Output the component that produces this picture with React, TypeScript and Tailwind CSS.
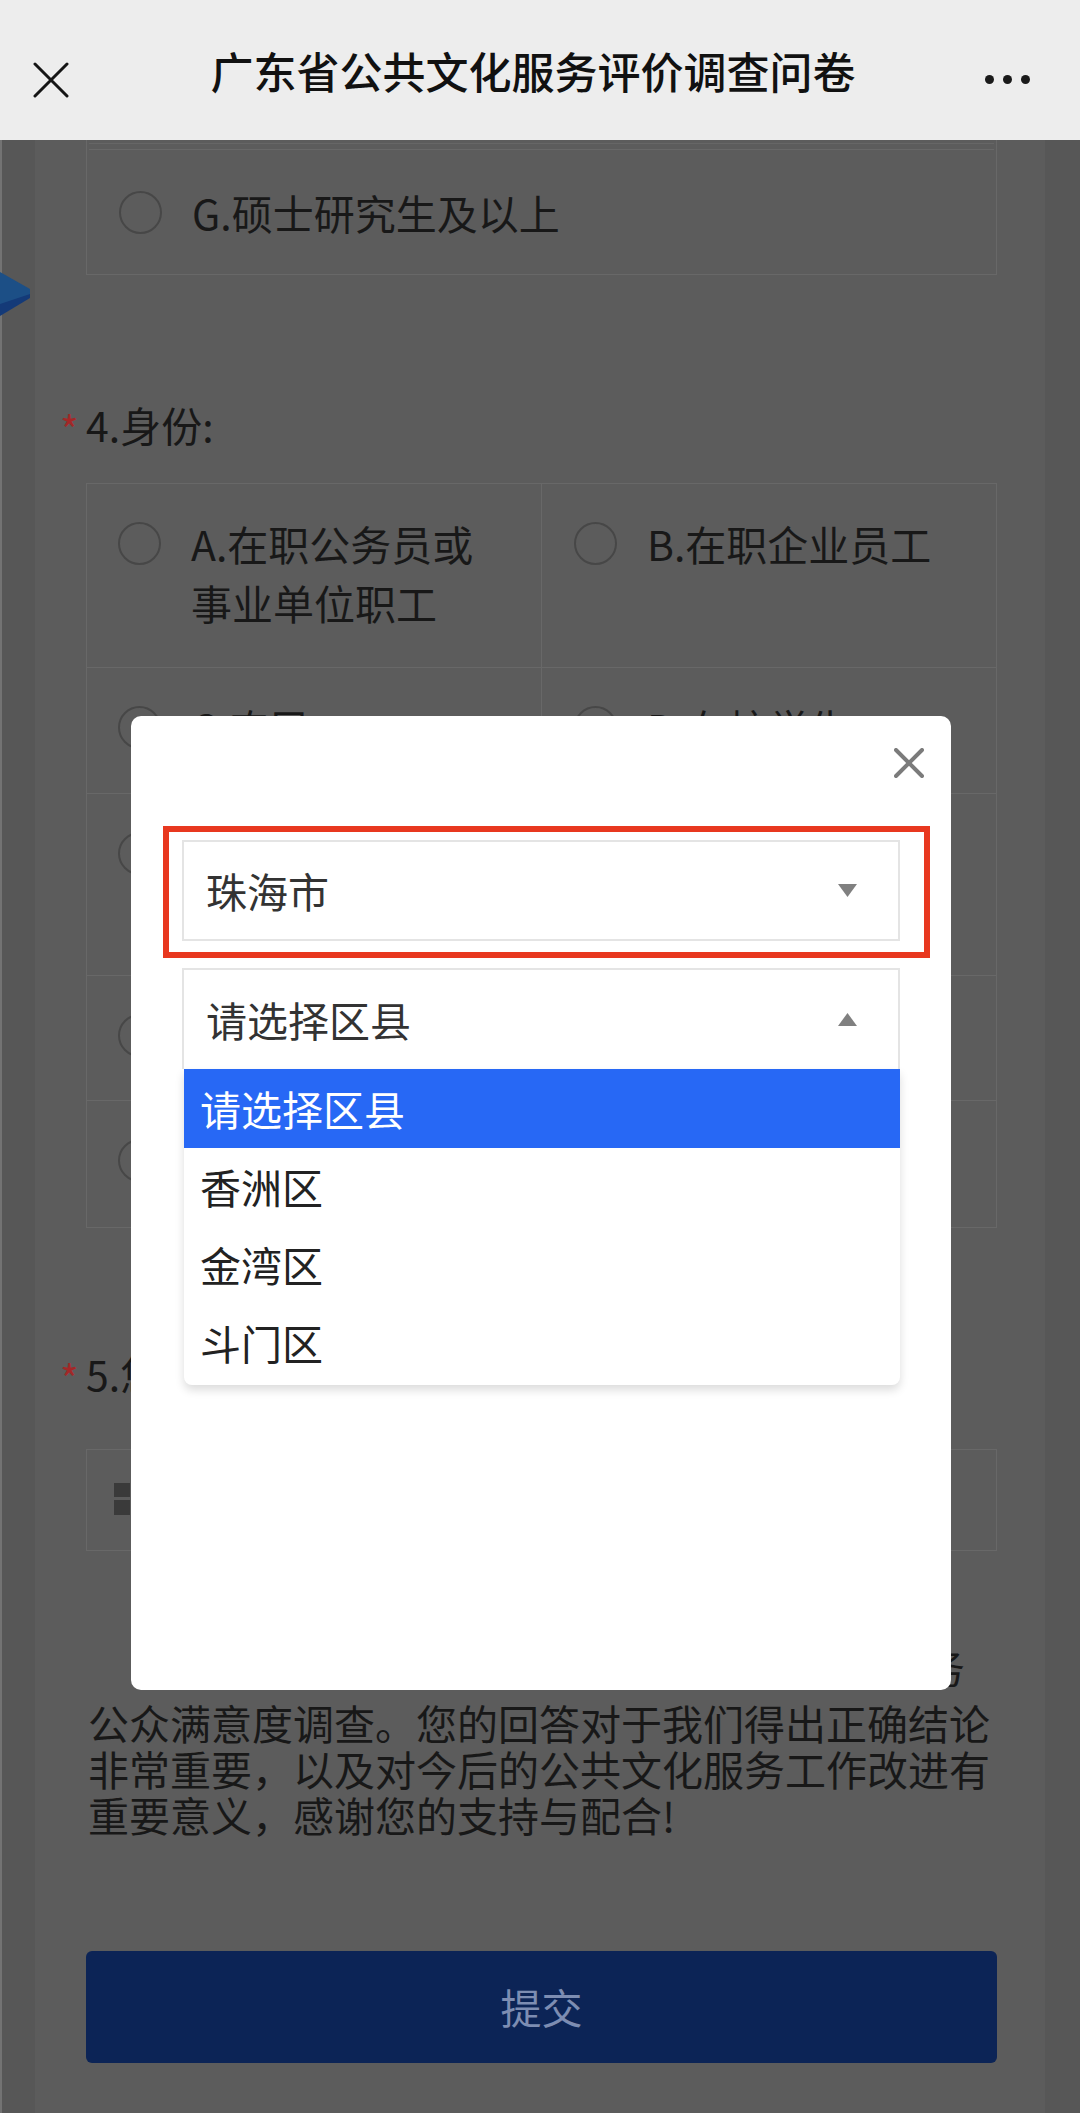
import React from "react";

const Radio = () => (
  <span className="mt-[8px] block h-[43px] w-[43px] shrink-0 rounded-full border-2 border-[#474747]" />
);

type Cell = { text: string[] };

const rows: { h: string; cells: Cell[] }[] = [
  { h: "h-[184px]", cells: [{ text: ["A.在职公务员或", "事业单位职工"] }, { text: ["B.在职企业员工"] }] },
  { h: "h-[126px]", cells: [{ text: ["C.农民"] }, { text: ["D.在校学生"] }] },
  { h: "h-[182px]", cells: [{ text: ["E.进城务工人员", "或个体经营者"] }, { text: ["F.离退休人员"] }] },
  { h: "h-[125px]", cells: [{ text: ["G.自由职业者"] }, { text: ["H.无业人员"] }] },
  { h: "h-[127px]", cells: [{ text: ["I.其他"] }, { text: [""] }] },
];

const Star = () => (
  <span className="-ml-[26px] w-[26px] self-start pt-[14px] text-[40px] leading-none text-[#a32828]">*</span>
);

export default function App() {
  return (
    <div className="relative h-[2113px] w-[1080px] overflow-hidden bg-[#575757] font-['Noto_Sans_CJK_SC','Noto_Sans',sans-serif]">
      {/* top bar */}
      <header className="relative flex h-[140px] items-center justify-center bg-[#ededed]">
        <svg className="absolute left-[33px] top-[62px]" width="36" height="36" viewBox="0 0 36 36">
          <path d="M2 2 L34 34 M34 2 L2 34" stroke="#151515" strokeWidth="3" strokeLinecap="round" />
        </svg>
        <h1 className="pr-[14px] text-[43px] font-medium leading-none text-[#111111]">广东省公共文化服务评价调查问卷</h1>
        <div className="absolute left-[985px] top-[75px] flex gap-[9px]">
          <span className="h-[9px] w-[9px] rounded-full bg-[#1a1a1a]" />
          <span className="h-[9px] w-[9px] rounded-full bg-[#1a1a1a]" />
          <span className="h-[9px] w-[9px] rounded-full bg-[#1a1a1a]" />
        </div>
      </header>

      {/* dimmed page */}
      <main className="mx-[35px] h-[1973px] bg-[#5c5c5c] pl-[51px] pr-[48px] text-[41px] text-[#181818]">
        {/* G option box */}
        <div className="flex h-[135px] flex-col border-x border-b border-[#686868] px-[2px]">
          <div className="mt-[3px] border-t border-[#666666]" />
          <div className="mt-[5px] flex flex-1 items-center border-t border-[#686868] pl-[30px]">
            <span className="block h-[43px] w-[43px] shrink-0 rounded-full border-2 border-[#474747]" />
            <span className="ml-[30px] leading-none">G.硕士研究生及以上</span>
          </div>
        </div>

        {/* Q4 */}
        <div className="mt-[120px] flex h-[59px] items-center leading-none">
          <Star />
          <span>4.身份:</span>
        </div>
        <div className="mt-[29px] border-t border-l border-[#686868]">
          {rows.map((r, i) => (
            <div key={i} className={`flex ${r.h} border-b border-[#686868]`}>
              {r.cells.map((c, j) => (
                <div
                  key={j}
                  className={`flex ${j === 0 ? "w-[455px] pl-[31px]" : "flex-1 pl-[32px]"} border-r border-[#686868] pt-[30px] pr-[40px]`}
                >
                  {c.text[0] !== "" && <Radio />}
                  <div className="ml-[30px] leading-[59px]">
                    {c.text.map((t, k) => (
                      <div key={k} className="whitespace-nowrap">
                        {t}
                      </div>
                    ))}
                  </div>
                </div>
              ))}
            </div>
          ))}
        </div>

        {/* Q5 */}
        <div className="mt-[116px] flex h-[59px] items-center leading-none">
          <Star />
          <span>5.您所在的地区:</span>
        </div>
        <div className="mt-[46px] flex h-[102px] items-start border border-[#686868] pl-[27px] pt-[33px]">
          <div className="grid grid-cols-2 gap-[3px]">
            <span className="h-[14px] w-[16px] bg-[#3a3a3a]" />
            <span className="h-[14px] w-[16px] bg-[#3a3a3a]" />
            <span className="h-[15px] w-[16px] bg-[#3a3a3a]" />
            <span className="h-[15px] w-[16px] bg-[#3a3a3a]" />
          </div>
          <span className="ml-[20px] text-[#3a3a3a]">请选择城市</span>
        </div>

        {/* intro text */}
        <div className="mt-[95px]">
          <div className="ml-[82px] mb-[12px] flex h-[41px] w-[797px] justify-end overflow-hidden whitespace-nowrap leading-[41px]">
            现特开展公共文化服务
          </div>
          <div className="leading-[46px]">
            <div className="ml-[2px] whitespace-nowrap">公众满意度调查。您的回答对于我们得出正确结论</div>
            <div className="ml-[2px] whitespace-nowrap">非常重要，以及对今后的公共文化服务工作改进有</div>
            <div className="ml-[2px] whitespace-nowrap">重要意义，感谢您的支持与配合!</div>
          </div>
        </div>

        <button className="mt-[114px] flex h-[112px] w-full items-center justify-center rounded-[6px] bg-[#0c2456] text-[41px] text-[#7d8db2]">
          提交
        </button>
      </main>

      {/* left edge line */}
      <div className="absolute left-0 top-[140px] h-[1973px] w-[2px] bg-[#737373]" />

      {/* decorative blue tile peeking at left edge */}
      <svg className="absolute left-0 top-[272px]" width="31" height="46" viewBox="0 0 31 46">
        <polygon points="0,0 30,17 30,25 0,40" fill="#1c4f86" />
        <polygon points="0,32 30,22 30,26 0,44" fill="#143a78" />
      </svg>

      {/* modal */}
      <div className="absolute left-[131px] top-[716px] flex h-[974px] w-[820px] flex-col rounded-[10px] bg-white px-[51px] pt-[32px]">
        <div className="flex justify-end">
          <svg className="-mr-[24px]" width="30" height="30" viewBox="0 0 30 30">
            <path d="M2 2 L28 28 M28 2 L2 28" stroke="#7b7b7b" strokeWidth="4" strokeLinecap="round" />
          </svg>
        </div>

        <div className="mt-[62px] flex h-[101px] items-center justify-between border-2 border-[#e4e4e4] pl-[22px] pr-[41px] text-[41px] text-[#333333]">
          <span className="leading-none">珠海市</span>
          <svg width="19" height="13" viewBox="0 0 19 13">
            <polygon points="0,0 19,0 9.5,13" fill="#808080" />
          </svg>
        </div>

        <div className="mt-[27px] flex h-[101px] items-center justify-between border-x-2 border-t-2 border-[#e4e4e4] pl-[22px] pr-[41px] text-[41px] text-[#333333]">
          <span className="leading-none">请选择区县</span>
          <svg width="19" height="13" viewBox="0 0 19 13">
            <polygon points="9.5,0 19,13 0,13" fill="#808080" />
          </svg>
        </div>
        <div className="ml-[2px] rounded-b-[8px] bg-white pb-[3px] text-[41px] text-[#222222] shadow-[0_5px_10px_rgba(0,0,0,0.14)]">
          <div className="flex h-[79px] items-center bg-[#2768f5] pl-[16px] text-white">请选择区县</div>
          <div className="flex h-[78px] items-center pl-[16px]">香洲区</div>
          <div className="flex h-[78px] items-center pl-[16px]">金湾区</div>
          <div className="flex h-[78px] items-center pl-[16px]">斗门区</div>
        </div>

        {/* red annotation box */}
        <div className="absolute left-[32px] top-[110px] h-[132px] w-[767px] border-[6px] border-[#e8381f]" />
      </div>
    </div>
  );
}
